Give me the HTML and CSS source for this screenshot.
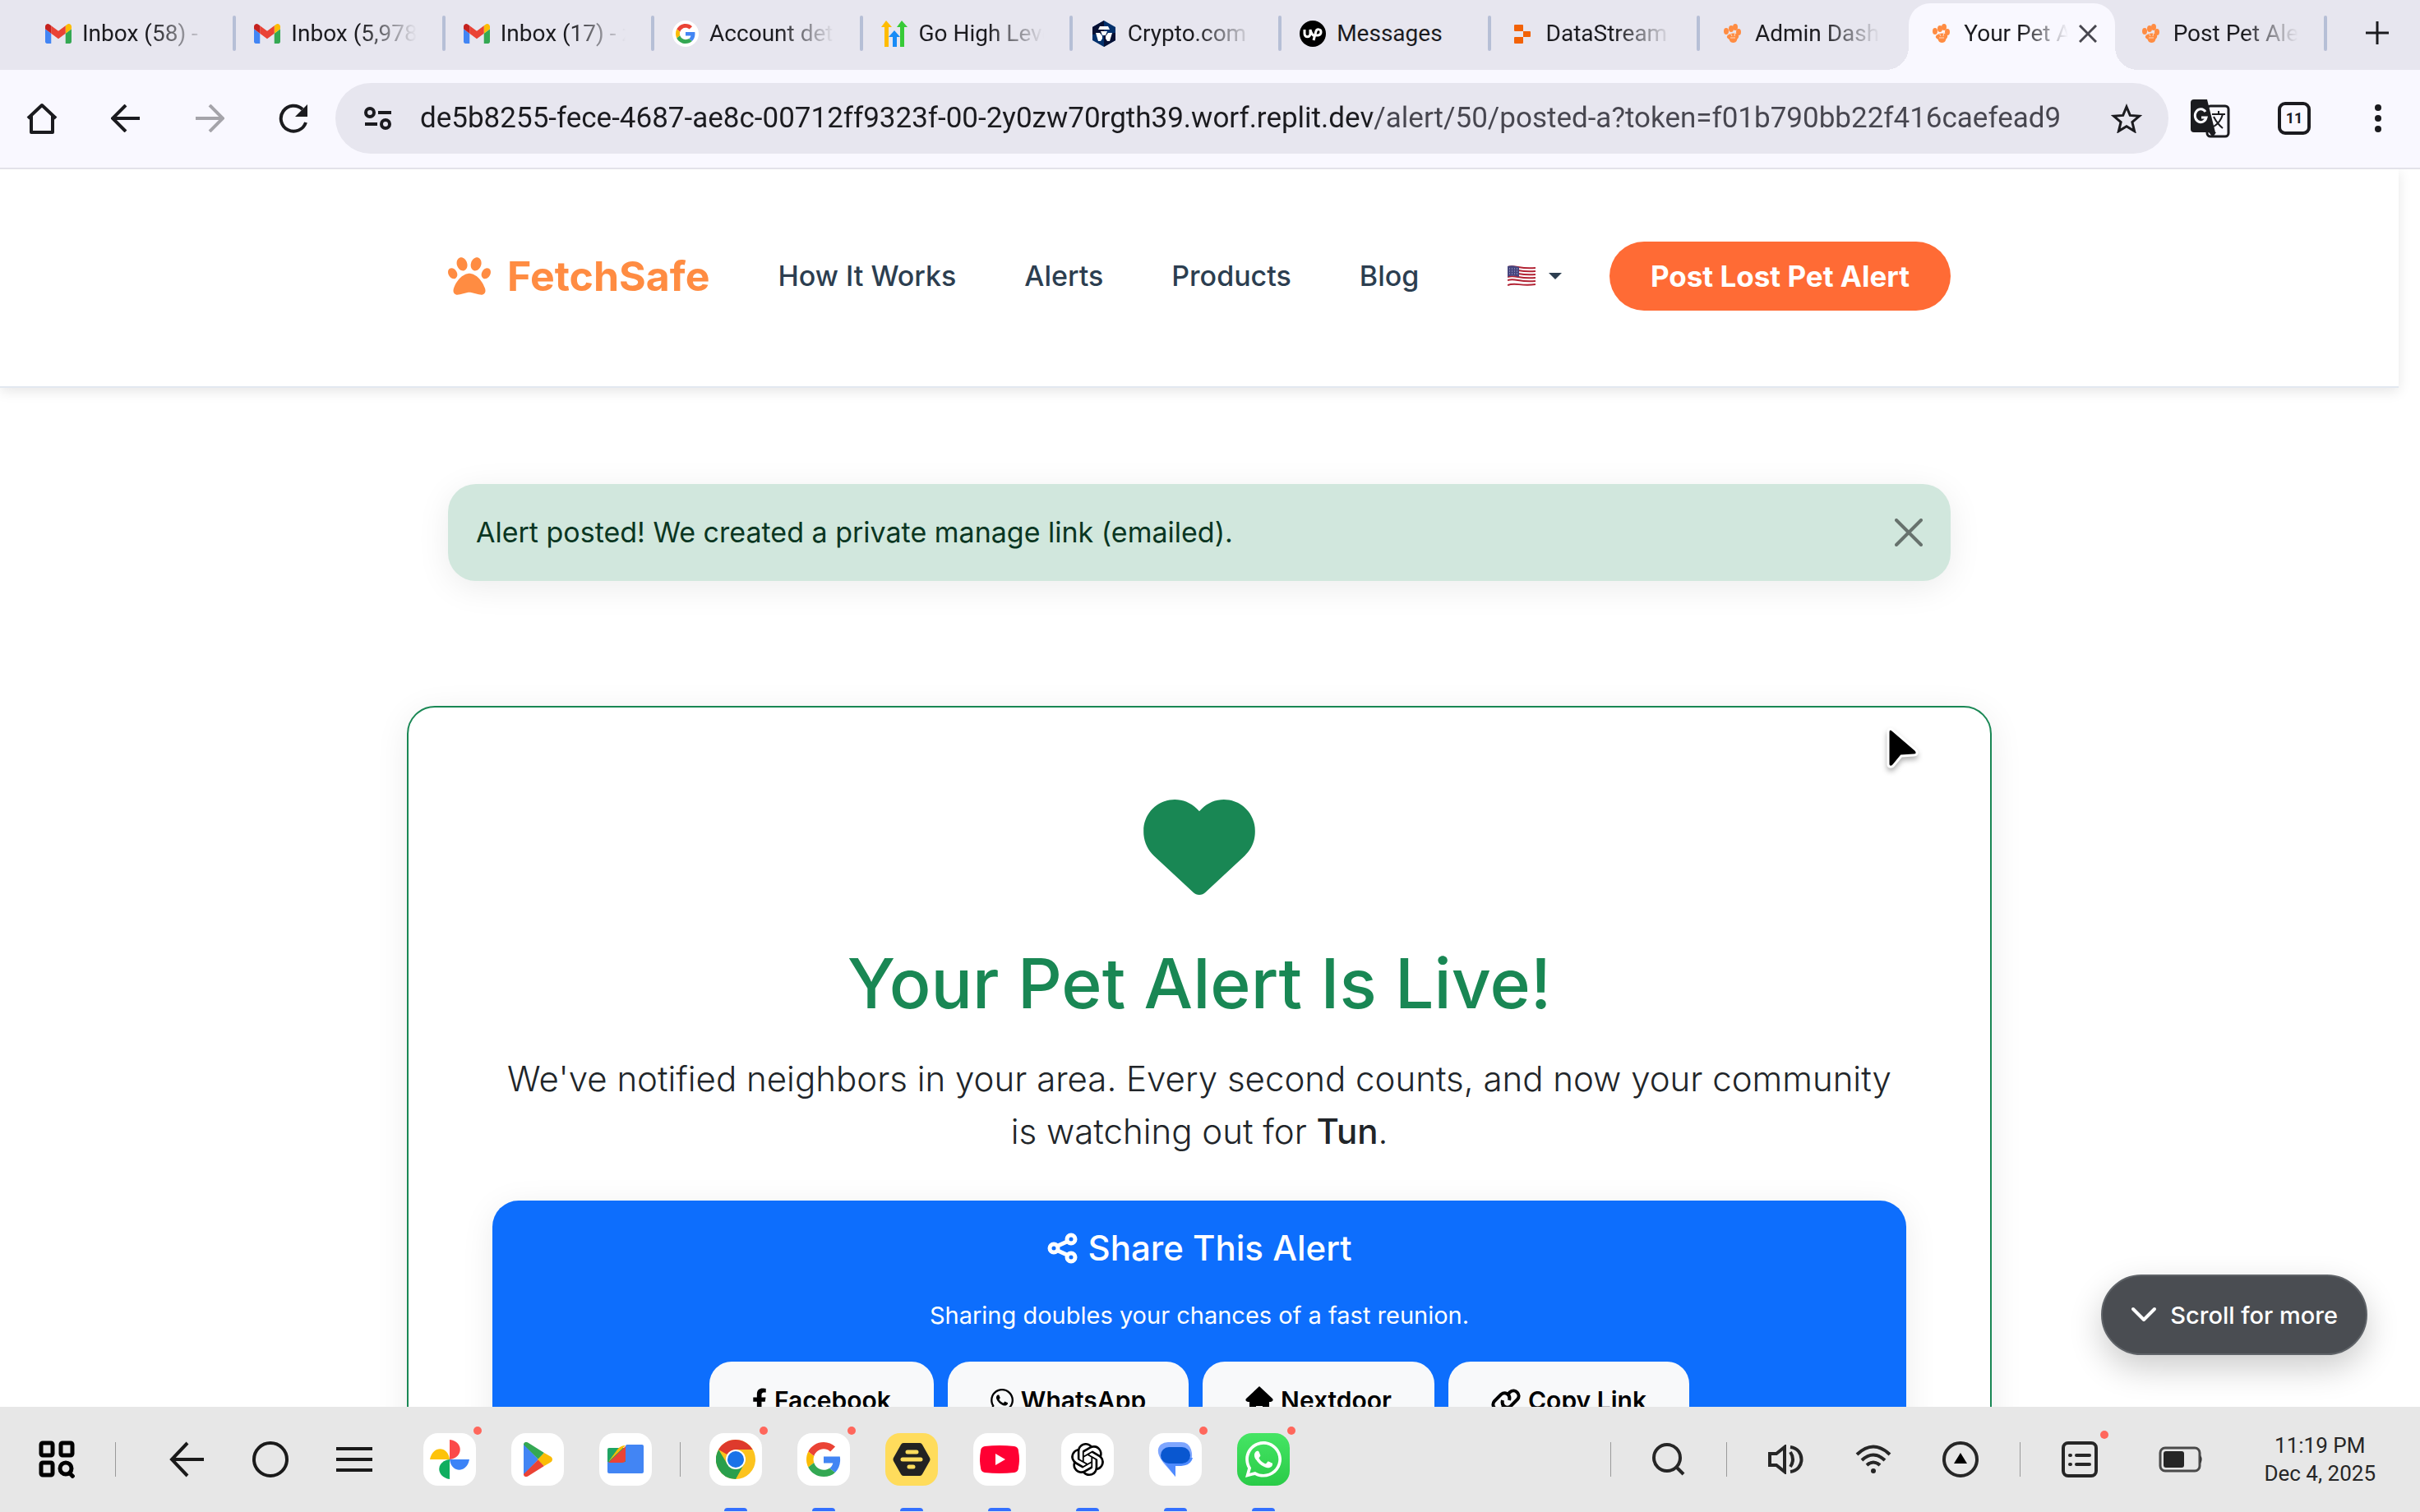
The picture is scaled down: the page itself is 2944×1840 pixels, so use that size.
FILE: index.html
```html
<!DOCTYPE html>
<html lang="en">
<head>
    <meta charset="UTF-8">
    <meta name="viewport" content="width=device-width, initial-scale=1.0">
    <title>Your Pet Alert Is Live!</title>
    <link rel="stylesheet" href="styles.css">
</head>
<body>
    <!-- Shared icon shapes -->
    <svg class="sprite" aria-hidden="true">
        <symbol id="gmail" viewBox="52 42 88 66">
            <path fill="#4285f4" d="M58 108h14V74L52 59v43c0 3.32 2.69 6 6 6"/>
            <path fill="#34a853" d="M120 108h14c3.32 0 6-2.69 6-6V59l-20 15"/>
            <path fill="#fbbc04" d="M120 48v26l20-15v-8c0-7.42-8.47-11.65-14.4-7.2"/>
            <path fill="#ea4335" d="M72 74V48l24 18 24-18v26L96 92"/>
            <path fill="#c5221f" d="M52 51v8l20 15V48l-5.6-4.2c-5.94-4.45-14.4-.22-14.4 7.2"/>
        </symbol>
        <symbol id="google" viewBox="0 0 48 48">
            <path fill="#ea4335" d="M24 9.5c3.54 0 6.71 1.22 9.21 3.6l6.85-6.85C35.9 2.38 30.47 0 24 0 14.62 0 6.51 5.38 2.56 13.22l7.98 6.19C12.43 13.72 17.74 9.5 24 9.5z"/>
            <path fill="#4285f4" d="M46.98 24.55c0-1.57-.15-3.09-.38-4.55H24v9.02h12.94c-.58 2.96-2.26 5.48-4.78 7.18l7.73 6c4.51-4.18 7.09-10.36 7.09-17.65z"/>
            <path fill="#fbbc05" d="M10.53 28.59c-.48-1.45-.76-2.99-.76-4.59s.27-3.14.76-4.59l-7.98-6.19C.92 16.46 0 20.12 0 24c0 3.88.92 7.54 2.56 10.78l7.97-6.19z"/>
            <path fill="#34a853" d="M24 48c6.48 0 11.93-2.13 15.89-5.81l-7.73-6c-2.15 1.45-4.92 2.3-8.16 2.3-6.26 0-11.57-4.22-13.47-9.91l-7.98 6.19C6.51 42.62 14.62 48 24 48z"/>
        </symbol>
        <symbol id="paw" viewBox="0 0 512 512">
            <path fill="currentColor" d="M226.5 92.9c14.3 42.9-.3 86.2-32.6 96.8s-70.1-15.6-84.4-58.5s.3-86.2 32.6-96.8s70.1 15.6 84.4 58.5zM100.4 198.6c18.9 32.4 14.3 70.1-10.2 84.1s-59.7-.9-78.5-33.3S-2.7 179.3 21.8 165.3s59.7 .9 78.5 33.3zM69.2 401.2C121.6 259.9 214.7 224 256 224s134.4 35.9 186.8 177.2c3.6 9.7 5.2 20.1 5.2 30.5v1.6c0 25.8-20.9 46.7-46.7 46.7c-11.5 0-22.9-1.4-34-4.2l-88-22c-15.3-3.8-31.3-3.8-46.6 0l-88 22c-11.1 2.8-22.5 4.2-34 4.2C84.9 480 64 459.1 64 433.3v-1.6c0-10.4 1.6-20.8 5.2-30.5zM421.8 282.7c-24.5-14-29.1-51.7-10.2-84.1s54-47.3 78.5-33.3s29.1 51.7 10.2 84.1s-54 47.3-78.5 33.3zM310.1 189.7c-32.3-10.6-46.9-53.9-32.6-96.8s52.1-69.1 84.4-58.5s46.9 53.9 32.6 96.8s-52.1 69.1-84.4 58.5z"/>
        </symbol>
        <symbol id="tab-paw" viewBox="0 0 32 32">
            <g fill="#ff8c42">
                <ellipse cx="10" cy="13" rx="3" ry="4"/><ellipse cx="16" cy="10" rx="3" ry="4"/>
                <ellipse cx="21" cy="8" rx="3" ry="4"/><ellipse cx="25" cy="14" rx="3" ry="4"/>
                <path d="M11 19c2-4 12-5 14-1 1 3-2 4-2 6-1 4-8 4-9 0 0-2-4-2-3-5z"/>
            </g>
            <path d="M15 15l2 4M21 14l-1 5M15 21h6" stroke="#ffd9bd" stroke-width="1" fill="none"/>
        </symbol>
        <symbol id="whatsapp" viewBox="0 0 448 512">
            <path fill="currentColor" d="M380.9 97.1C339 55.1 283.2 32 223.9 32c-122.4 0-222 99.6-222 222 0 39.1 10.2 77.3 29.6 111L0 480l117.7-30.9c32.4 17.7 68.9 27 106.1 27h.1c122.3 0 224.1-99.6 224.1-222 0-59.3-25.2-115-67.1-157zm-157 341.6c-33.2 0-65.7-8.9-94-25.7l-6.7-4-69.8 18.3L72 359.2l-4.4-7c-18.5-29.4-28.2-63.3-28.2-98.2 0-101.7 82.8-184.5 184.6-184.5 49.3 0 95.6 19.2 130.4 54.1 34.8 34.9 56.2 81.2 56.1 130.5 0 101.8-84.9 184.6-186.6 184.6zm101.2-138.2c-5.5-2.8-32.8-16.2-37.9-18-5.1-1.9-8.8-2.8-12.5 2.8-3.7 5.6-14.3 18-17.6 21.8-3.2 3.7-6.5 4.2-12 1.4-32.6-16.3-54-29.1-75.5-66-5.7-9.8 5.7-9.1 16.3-30.3 1.8-3.7.9-6.9-.5-9.7-1.4-2.8-12.5-30.1-17.1-41.2-4.5-10.8-9.1-9.3-12.5-9.5-3.2-.2-6.9-.2-10.6-.2-3.7 0-9.7 1.4-14.8 6.9-5.1 5.6-19.4 19-19.4 46.3 0 27.3 19.9 53.7 22.6 57.4 2.8 3.7 39.1 59.7 94.8 83.8 35.2 15.2 49 16.5 66.6 13.9 10.7-1.6 32.8-13.4 37.4-26.4 4.6-13 4.6-24.1 3.2-26.4-1.3-2.5-5-3.9-10.5-6.6z"/>
        </symbol>
    </svg>

    <!-- Tabs -->
    <div class="tab-strip">
        <div class="tab"><svg class="favicon"><use href="#gmail"/></svg><span class="tab-title">Inbox (58) - </span><span class="tab-sep"></span></div>
        <div class="tab"><svg class="favicon"><use href="#gmail"/></svg><span class="tab-title">Inbox (5,978)</span><span class="tab-sep"></span></div>
        <div class="tab"><svg class="favicon"><use href="#gmail"/></svg><span class="tab-title">Inbox (17) - z</span><span class="tab-sep"></span></div>
        <div class="tab">
            <svg class="favicon" viewBox="0 0 32 32"><circle cx="16" cy="16" r="16" fill="#fff"/><use href="#google" x="4" y="4" width="24" height="24"/></svg>
            <span class="tab-title">Account details</span><span class="tab-sep"></span>
        </div>
        <div class="tab">
            <svg class="favicon" viewBox="0 0 32 32"><path fill="#ffbc00" d="M6 0l7 8h-4v24H4V8H0z"/><path fill="#188bf6" d="M16 12l7 8h-4v12h-5V20H9z"/><path fill="#37ca37" d="M25 0l7 8h-4v24h-5V8h-4z"/></svg>
            <span class="tab-title">Go High Level</span><span class="tab-sep"></span>
        </div>
        <div class="tab">
            <svg class="favicon" viewBox="0 0 32 32"><path fill="#03316c" d="M16 0l14 8v16l-14 8L2 24V8z"/><path fill="#061033" d="M16 0L2 8v9l14-1zM16 32l14-8v-9l-14 1z"/><path fill="#fff" d="M11 7h10l2 4H9zM6 15h5l3 4v3l-2 3H9zM26 15h-5l-3 4v3l2 3h3zM12 13h8l-2 5h-4z"/></svg>
            <span class="tab-title">Crypto.com</span><span class="tab-sep"></span>
        </div>
        <div class="tab">
            <svg class="favicon" viewBox="0 0 32 32"><circle cx="16" cy="16" r="16"/><path d="M6 11v5c0 5 7 5 7 0v-5c1 4 3 7 5 8M17 24l3-11c1-3 6-3 6 1s-5 5-7 3" fill="none" stroke="#fff" stroke-width="3"/></svg>
            <span class="tab-title full">Messages</span><span class="tab-sep"></span>
        </div>
        <div class="tab">
            <svg class="favicon" viewBox="0 0 32 32"><path fill="#f26207" d="M7 5h9q1 0 1 1v7H7q-1 0-1-1V6q0-1 1-1zM17 13h8q1 0 1 1v5q0 1-1 1h-8zM6 21q0-1 1-1h10v7q0 1-1 1H7q-1 0-1-1z"/></svg>
            <span class="tab-title">DataStream</span><span class="tab-sep"></span>
        </div>
        <div class="tab"><svg class="favicon"><use href="#tab-paw"/></svg><span class="tab-title">Admin Dash</span><span class="tab-sep hidden"></span></div>
        <div class="tab active">
            <svg class="favicon"><use href="#tab-paw"/></svg><span class="tab-title">Your Pet Alert</span>
            <button class="tab-close" aria-label="Close tab"><svg width="22" height="22" viewBox="0 0 22 22"><path d="M1 1l20 20M21 1L1 21" stroke="#47464f" stroke-width="3"/></svg></button>
        </div>
        <div class="tab"><svg class="favicon"><use href="#tab-paw"/></svg><span class="tab-title">Post Pet Alert</span><span class="tab-sep"></span></div>
        <button class="new-tab" aria-label="New tab"><svg width="28" height="28" viewBox="0 0 28 28"><path d="M14 0v28M0 14h28" stroke="#1b1b1f" stroke-width="3"/></svg></button>
    </div>

    <!-- Address bar -->
    <div class="toolbar">
        <button class="tool" aria-label="Home"><svg width="40" height="40" viewBox="0 0 40 40"><path d="M3 20L20 4l17 16M7 17v20h26V17" fill="none" stroke="currentColor" stroke-width="4" stroke-linejoin="round"/></svg></button>
        <button class="tool" aria-label="Back"><svg width="36" height="34" viewBox="0 0 36 34"><path d="M35 17H3M18 1L2 17l16 16" fill="none" stroke="currentColor" stroke-width="4"/></svg></button>
        <button class="tool disabled" aria-label="Forward"><svg width="36" height="34" viewBox="0 0 36 34"><path d="M1 17h32M18 1l16 16-16 16" fill="none" stroke="currentColor" stroke-width="4"/></svg></button>
        <button class="tool" aria-label="Reload"><svg width="36" height="36" viewBox="0 0 36 36"><path d="M33 23A15.500 15.500 0 1 1 29 7" fill="none" stroke="currentColor" stroke-width="4"/><path d="M35 1v15H20z" fill="currentColor"/></svg></button>
        <div class="omnibox">
            <svg width="34" height="28" viewBox="0 0 34 28" fill="none" stroke="#1b1b1f" stroke-width="4"><circle cx="7" cy="7" r="5"/><path d="M17 7h16M1 21h15"/><circle cx="26" cy="21" r="5"/></svg>
            <input class="url" type="text" aria-label="Address" value="de5b8255-fece-4687-ae8c-00712ff9323f-00-2y0zw70rgth39.worf.replit.dev/alert/50/posted-a?token=f01b790bb22f416caefead9">
            <button class="star" aria-label="Bookmark"><svg width="38" height="36" viewBox="0 0 38 36"><path d="M19 4l4.300 10.400 11.200.9-8.600 7.300 2.700 11L19 27.700l-9.600 5.900 2.700-11-8.600-7.300 11.200-.9z" fill="none" stroke="currentColor" stroke-width="3"/></svg></button>
        </div>
        <button class="tool" aria-label="Translate"><svg width="48" height="48" viewBox="0 0 48 48"><rect x="20" y="9" width="26" height="37" rx="4" fill="none" stroke="currentColor" stroke-width="3"/><path d="M4 1h16l10 40H4q-4 0-4-4V5q0-4 4-4z" fill="currentColor"/><path d="M22 41h9l-4 6z" fill="currentColor"/><path d="M18 16a7 8 0 1 0 1 7h-6" fill="none" stroke="#f9f8ff" stroke-width="3"/><path d="M26 19h16M34 15v4M39 19c-2 8-6 12-11 15M28 22c3 6 6 10 11 14" fill="none" stroke="currentColor" stroke-width="2"/></svg></button>
        <button class="tool tab-count" aria-label="Open tabs"><span>11</span></button>
        <button class="tool" aria-label="Menu"><svg width="10" height="36" viewBox="0 0 10 36" fill="currentColor"><circle cx="5" cy="5" r="4"/><circle cx="5" cy="18" r="4"/><circle cx="5" cy="31" r="4"/></svg></button>
    </div>

    <!-- Page -->
    <div class="page">
        <header class="site-header">
            <nav class="container nav">
                <a class="brand" href="#"><svg width="52" height="52"><use href="#paw"/></svg>FetchSafe</a>
                <a class="nav-link" href="#">How It Works</a>
                <a class="nav-link" href="#">Alerts</a>
                <a class="nav-link" href="#">Products</a>
                <a class="nav-link" href="#">Blog</a>
                <div class="nav-actions">
                    <button class="lang" aria-label="Language">
                        <svg width="34" height="26" viewBox="0 0 34 26"><path d="M0 1c10-3 14 4 34 1v21c-14 4-22-3-34 2z" fill="#fff"/><path d="M0 2c10-3 14 3 34 1M0 6c10-3 14 3 34 1M0 10c10-3 14 3 34 1M0 14c10-3 14 3 34 1M0 18c10-3 14 3 34 1M0 24c10-4 16 2 34-1" fill="none" stroke="#b22334" stroke-width="2"/><path d="M0 1c6-2 10 0 14 1v12c-5-1-9-2-14 0z" fill="#46467f"/><path d="M2 4h11M2 7h11M2 10h11" stroke="#b9b9dd" stroke-width="1" stroke-dasharray="1 2"/></svg>
                        <svg width="16" height="8" viewBox="0 0 16 8"><path d="M0 0h16L8 8z" fill="#2c3e50"/></svg>
                    </button>
                    <button class="btn-post">Post Lost Pet Alert</button>
                </div>
            </nav>
        </header>

        <main>
            <div class="container alert" role="alert">
                <span>Alert posted! We created a private manage link (emailed).</span>
                <button class="alert-close" aria-label="Close"><svg width="34" height="34" viewBox="0 0 34 34"><path d="M2 2l30 30M32 2L2 32" stroke="#000" stroke-width="4" stroke-linecap="round"/></svg></button>
            </div>

            <section class="card">
                <svg class="heart" width="136" height="116" viewBox="0 42 512 438"><path fill="currentColor" d="M47.600 300.400L228.300 469.100c7.500 7 17.400 10.900 27.700 10.900s20.200-3.900 27.700-10.900L464.400 300.400c30.400-28.300 47.600-68 47.600-109.500v-5.800c0-69.900-50.500-129.500-119.400-141C347 36.500 300.600 51.400 268 84L256 96 244 84c-32.600-32.600-79-47.500-124.600-39.900C50.500 55.600 0 115.200 0 185.100v5.800c0 41.500 17.200 81.200 47.600 109.500z"/></svg>
                <h1>Your Pet Alert Is Live!</h1>
                <p class="lead">We've notified neighbors in your area. Every second counts, and now your community is watching out for <strong>Tun</strong>.</p>

                <div class="share">
                    <h2><svg width="38" height="38" viewBox="0 0 38 38" fill="none" stroke="currentColor" stroke-width="5"><circle cx="8" cy="19" r="5"/><circle cx="29" cy="8" r="5"/><circle cx="29" cy="30" r="5"/><path d="M13 16l11-5M13 22l11 5"/></svg>Share This Alert</h2>
                    <p>Sharing doubles your chances of a fast reunion.</p>
                    <div class="share-buttons">
                        <button><svg width="18" height="30" viewBox="0 0 320 512"><path fill="currentColor" d="M279 288l14-93h-89v-60c0-25 12-50 52-50h41V6S260 0 225 0c-73 0-121 44-121 125v70H23v93h81v224h100V288z"/></svg>Facebook</button>
                        <button><svg width="28" height="32"><use href="#whatsapp"/></svg>WhatsApp</button>
                        <button><svg width="34" height="34" viewBox="0 0 34 34"><path fill="currentColor" d="M17 0l16 15q2 3-2 4h-2v11q0 3-3 3h-5v-9h-8v9H8q-3 0-3-3V19H3q-4-1-2-4z"/></svg>Nextdoor</button>
                        <button><svg width="36" height="30" viewBox="0 0 36 30" fill="none" stroke="currentColor" stroke-width="4"><path d="M16 22l-3 3c-6 5-14-3-9-9l8-8c5-4 12 0 10 7"/><path d="M20 8l3-3c6-5 14 3 9 9l-8 8c-5 4-12 0-10-7"/></svg>Copy Link</button>
                    </div>
                </div>
            </section>
        </main>

        <button class="scroll-more"><svg width="32" height="20" viewBox="0 0 32 20"><path d="M3 3l13 13L29 3" fill="none" stroke="#fff" stroke-width="4" stroke-linecap="round" stroke-linejoin="round"/></svg>Scroll for more</button>
        <svg class="cursor" width="48" height="56" viewBox="0 0 48 56"><path d="M5 7c0-4 3-5 6-2l27 23c4 4 2 7-2 7l-15 1-9 11c-3 4-7 2-7-1z" fill="#000" stroke="#fff" stroke-width="3"/></svg>
    </div>

    <!-- System taskbar -->
    <footer class="taskbar">
        <button aria-label="All apps"><svg width="44" height="46" viewBox="0 0 44 46" fill="none" stroke="#000" stroke-width="5"><rect x="3" y="3" width="14" height="15" rx="2"/><rect x="27" y="3" width="14" height="15" rx="2"/><rect x="3" y="27" width="14" height="15" rx="2"/><circle cx="33" cy="34" r="7"/><path d="M37 39l6 6"/></svg></button>
        <span class="bar-sep"></span>
        <div class="system-nav">
            <button aria-label="Back"><svg width="44" height="44" viewBox="0 0 44 44"><path d="M43 22H5M23 2L4 22l19 20" fill="none" stroke="#1a1a1a" stroke-width="4"/></svg></button>
            <button aria-label="Home"><svg width="44" height="44" viewBox="0 0 44 44"><circle cx="22" cy="22" r="20" fill="none" stroke="#1a1a1a" stroke-width="4"/></svg></button>
            <button aria-label="Recents"><svg width="44" height="32" viewBox="0 0 44 32"><path d="M0 3h44M0 16h44M0 29h44" stroke="#1a1a1a" stroke-width="4"/></svg></button>
        </div>
        <div class="apps">
            <a class="app notify" href="#" aria-label="Photos"><svg width="48" height="48" viewBox="0 0 48 48"><path fill="#fb4a4a" d="M24 0c17 2 17 22 0 24z"/><path fill="#3c83f7" d="M24 24h24c-3 17-22 17-24 0z"/><path fill="#0fae5f" d="M24 24v24c-17-3-17-22 0-24z"/><path fill="#fdc30a" d="M0 24h24c-2-17-21-17-24 0z"/></svg></a>
            <a class="app" href="#" aria-label="Play Store"><svg width="38" height="42" viewBox="0 0 38 42"><path fill="#4285f4" d="M2 2v38l18-19z"/><path fill="#34a853" d="M2 3c0-3 3-4 6-2l19 12-7 8z"/><path fill="#ea4335" d="M2 39c0 3 3 4 6 2l19-12-7-8z"/><path fill="#fbbc04" d="M27 13l7 4c4 2 4 6 0 8l-7 4-8-8z"/></svg></a>
            <a class="app" href="#" aria-label="Files"><svg width="44" height="36" viewBox="0 0 44 36"><path d="M22 2q0-2 2-2h18q2 0 2 2v31q0 2-2 2H2q-2 0-2-2V20h22z" fill="#4285f4"/><path d="M2 4h20v17H0V6q0-2 2-2z" fill="#1fa463"/><path d="M22 2v16q0 4-4 4H1z" fill="#ea4335"/><path d="M22 1L1 21 12 6q4-5 10-5z" fill="#fbbc04"/></svg></a>
        </div>
        <span class="bar-sep"></span>
        <div class="apps">
            <a class="app running notify" href="#" aria-label="Chrome"><svg width="48" height="48" viewBox="0 0 48 48"><circle cx="24" cy="24" r="24" fill="#fcc31e"/><path fill="#de3a2c" d="M24 24L3 12a24 24 0 0 1 41.500 0H24z"/><path fill="#2a9f4c" d="M3.200 12A24 24 0 0 0 24 48l10-18-20 0z"/><circle cx="24" cy="24" r="12" fill="#fff"/><circle cx="24" cy="24" r="10" fill="#1a73e8"/></svg></a>
            <a class="app running notify" href="#" aria-label="Google"><svg width="42" height="42"><use href="#google"/></svg></a>
            <a class="app running yellow" href="#" aria-label="Hive"><svg width="46" height="40" viewBox="0 0 46 40"><path d="M13 0h20q2 0 3 2l9 16q1 2 0 4l-9 16q-1 2-3 2H13q-2 0-3-2L1 22q-1-2 0-4l9-16q1-2 3-2z" fill="#222"/><path d="M18 11h11M12 20h22M20 29h5" stroke="#ffdc5c" stroke-width="5" stroke-linecap="round"/></svg></a>
            <a class="app running" href="#" aria-label="YouTube"><svg width="48" height="34" viewBox="0 0 48 34"><path d="M6 1q18-2 36 0 5 1 5 6 2 10 0 20-0 5-5 6-18 2-36 0-5-1-5-6-2-10 0-20 0-5 5-6z" fill="#ff0033"/><path d="M19 10v14l12-7z" fill="#fff"/></svg></a>
            <a class="app running" href="#" aria-label="ChatGPT"><svg width="40" height="40" viewBox="0 0 24 24"><path d="M22.282 9.821a5.985 5.985 0 0 0-.516-4.911 6.046 6.046 0 0 0-6.510-2.900A6.065 6.065 0 0 0 4.981 4.182a5.985 5.985 0 0 0-3.998 2.900 6.046 6.046 0 0 0 .743 7.097 5.980 5.980 0 0 0 .511 4.911 6.051 6.051 0 0 0 6.515 2.900A5.985 5.985 0 0 0 13.260 24a6.056 6.056 0 0 0 5.772-4.206 5.989 5.989 0 0 0 3.998-2.900 6.056 6.056 0 0 0-.748-7.073zm-9.022 12.608a4.476 4.476 0 0 1-2.876-1.041l.142-.080 4.778-2.758a.795.795 0 0 0 .393-.681v-6.737l2.020 1.169a.071.071 0 0 1 .038.052v5.583a4.504 4.504 0 0 1-4.495 4.494zm-9.661-4.125a4.471 4.471 0 0 1-.535-3.014l.142.085 4.783 2.758a.771.771 0 0 0 .781 0l5.843-3.369v2.332a.080.080 0 0 1-.033.062L9.740 19.950a4.499 4.499 0 0 1-6.141-1.646zM2.341 7.896a4.485 4.485 0 0 1 2.366-1.973V11.600a.766.766 0 0 0 .388.677l5.814 3.354-2.020 1.169a.076.076 0 0 1-.071 0l-4.830-2.787A4.504 4.504 0 0 1 2.341 7.872zm16.596 3.856L13.104 8.364 15.119 7.200a.076.076 0 0 1 .071 0l4.830 2.791a4.494 4.494 0 0 1-.677 8.104v-5.677a.790.790 0 0 0-.407-.667zm2.011-3.023l-.142-.085-4.774-2.782a.776.776 0 0 0-.785 0L9.409 9.230V6.897a.066.066 0 0 1 .028-.062l4.830-2.787a4.499 4.499 0 0 1 6.680 4.660zM8.307 12.863l-2.020-1.164a.080.080 0 0 1-.038-.057V6.074a4.499 4.499 0 0 1 7.376-3.454l-.142.081L8.704 5.459a.795.795 0 0 0-.393.681zm1.098-2.365l2.602-1.500 2.607 1.500v2.999l-2.597 1.500-2.607-1.500Z"/></svg></a>
            <a class="app running notify" href="#" aria-label="Messages"><svg width="44" height="44" viewBox="0 0 44 44"><path d="M13 1h16q9 0 12 9 5 17-12 19l-7 1v13L8 27Q-4 12 4 4q4-3 9-3z" fill="#7ea6ff"/><path d="M4 20h39q-2 9-14 10h-7v13z" fill="#4f8bff"/><rect x="4" y="7" width="36" height="20" rx="10" fill="#0957d0"/></svg></a>
            <a class="app running notify green" href="#" aria-label="WhatsApp"><svg width="44" height="46" viewBox="0 32 448 448"><use href="#whatsapp" width="448" height="512"/></svg></a>
        </div>

        <div class="tray">
            <span class="bar-sep"></span>
            <button aria-label="Search"><svg width="40" height="40" viewBox="0 0 40 40" fill="none" stroke="#262626" stroke-width="4"><circle cx="18" cy="18" r="16"/><path d="M29 29l9 9"/></svg></button>
            <span class="bar-sep"></span>
            <div class="status">
                <svg width="44" height="36" viewBox="0 0 44 36" fill="none" stroke="#262626" stroke-width="4"><path d="M2 11h8L20 3v30L10 25H2zM27 9q6 9 0 18"/><path d="M27 3c18 2 18 28 0 30"/></svg>
                <svg width="44" height="36" viewBox="0 0 44 36" fill="none" stroke="#262626" stroke-width="4"><path d="M2 12q20-19 40 0M8 19q14-13 28 0M14 25q8-7 16 0"/><circle cx="22" cy="32" r="3" fill="#262626" stroke="none"/></svg>
                <svg width="44" height="44" viewBox="0 0 44 44"><circle cx="22" cy="22" r="20" fill="none" stroke="#262626" stroke-width="4"/><path d="M22 14l8 13H14z"/></svg>
            </div>
            <span class="bar-sep"></span>
            <button class="notes notify" aria-label="Notifications"><svg width="44" height="44" viewBox="0 0 44 44" fill="none" stroke="#262626" stroke-width="4"><rect x="2" y="2" width="40" height="40" rx="6"/><path d="M10 17h1M10 28h1M18 17h16M18 28h16" stroke-linecap="round"/></svg></button>
            <svg class="battery" width="54" height="32" viewBox="0 0 54 32"><rect x="2" y="2" width="48" height="28" rx="6" fill="none" stroke="#4a4a4a" stroke-width="3"/><path d="M51 11q3 5 0 10z" fill="#262626"/><rect x="6" y="6" width="25" height="20" rx="3" fill="#262626"/></svg>
            <div class="clock"><span>11:19 PM</span><span>Dec 4, 2025</span></div>
        </div>
    </footer>
</body>
</html>
```
FILE: styles.css
```css
* {
    box-sizing: border-box;
}
body {
    margin: 0;
    height: 100vh;
    display: flex;
    flex-direction: column;
    overflow: hidden;
    font-family: Inter, sans-serif;
    background-color: #fff;
    color: #212529;
}
button {
    font-family: inherit;
    border: none;
    padding: 0;
    background: none;
    color: inherit;
}
a {
    color: inherit;
    text-decoration: none;
}
svg {
    flex-shrink: 0;
    display: block;
}
.sprite {
    position: absolute;
    width: 0;
    height: 0;
}

/* Browser tabs */
.tab-strip {
    display: grid;
    grid-template-columns: repeat(11, minmax(0, 1fr)) 113px;
    height: 85px;
    padding-left: 33px;
    background-color: #e7e6ef;
    font-family: Roboto, sans-serif;
    color: #1b1b1f;
}
.tab {
    display: flex;
    align-items: center;
    gap: 13px;
    padding: 0 0 4px 22px;
}
.favicon {
    width: 32px;
    height: 32px;
}
.tab-title {
    flex: 1;
    min-width: 0;
    margin-right: 18px;
    overflow: hidden;
    white-space: pre;
    font-size: 28px;
    line-height: 40px;
    -webkit-mask-image: linear-gradient(90deg, #000 55%, transparent);
    mask-image: linear-gradient(90deg, #000 55%, transparent);
}
.tab-title.full {
    -webkit-mask-image: none;
    mask-image: none;
}
.tab-sep {
    width: 4px;
    height: 43px;
    border-radius: 2px;
    background-color: #b6bfd6;
}
.tab-sep.hidden {
    visibility: hidden;
}
.tab.active {
    position: relative;
    margin: 4px 4px 0 0;
    padding: 0 22px 8px;
    border-radius: 26px 26px 0 0;
    background-color: #f9f8ff;
}
.tab.active::before,
.tab.active::after {
    content: "";
    position: absolute;
    bottom: 0;
    width: 28px;
    height: 28px;
}
.tab.active::before {
    left: -28px;
    background: radial-gradient(circle at 0 0, transparent 28px, #f9f8ff 28px);
}
.tab.active::after {
    right: -28px;
    background: radial-gradient(circle at 100% 0, transparent 28px, #f9f8ff 28px);
}
.tab.active .tab-title {
    margin-right: 0;
}
.new-tab {
    padding: 0 0 5px 9px;
    display: flex;
    align-items: center;
    justify-content: center;
}

/* Toolbar */
.toolbar {
    display: flex;
    align-items: center;
    height: 121px;
    padding-bottom: 1px;
    background-color: #f9f8ff;
    border-bottom: 2px solid #e3e2e9;
    color: #1b1b1f;
    font-family: Roboto, sans-serif;
}
.tool {
    width: 102px;
    height: 86px;
    display: flex;
    align-items: center;
    justify-content: center;
}
.tool.disabled {
    color: #a5a4aa;
}
.omnibox {
    flex: 1;
    min-width: 0;
    height: 86px;
    display: flex;
    align-items: center;
    gap: 34px;
    padding: 0 32px 0 35px;
    border-radius: 43px;
    background-color: #e7e6ef;
}
.url {
    flex: 1;
    min-width: 0;
    margin-right: 16px;
    padding: 0;
    border: none;
    outline: none;
    font-family: inherit;
    font-size: 35px;
    line-height: 44px;
    color: transparent;
    /* host is darker than the path */
    background: linear-gradient(90deg, #1b1b1f 1158px, #47464f 1158px);
    -webkit-background-clip: text;
    background-clip: text;
}
.tab-count span {
    width: 40px;
    height: 40px;
    border: 4px solid #1b1b1f;
    border-radius: 9px;
    font-size: 18px;
    font-weight: 700;
    line-height: 32px;
    text-align: center;
}

/* Page */
.page {
    flex: 1;
    min-height: 0;
    position: relative;
    overflow: hidden;
    padding-right: 26px;
}
.site-header {
    padding: 88px 0 92px;
    border-bottom: 2px solid #e2e8f0;
    box-shadow: 0 4px 15px rgba(0, 0, 0, 0.1);
}
.container {
    max-width: 1828px;
    margin: 0 auto;
}
.nav {
    display: flex;
    align-items: center;
    gap: 83px;
}
.brand {
    display: flex;
    align-items: center;
    gap: 20px;
    color: #ff8c42;
    font-size: 50px;
    font-weight: 700;
    line-height: 64px;
}
.nav-link {
    color: #2c3e50;
    font-size: 34px;
    font-weight: 500;
    line-height: 52px;
}
.nav-actions {
    display: flex;
    align-items: center;
    gap: 58px;
    margin-left: auto;
}
.lang {
    display: flex;
    align-items: center;
    gap: 16px;
}
.btn-post {
    height: 84px;
    padding: 0 50px;
    border-radius: 42px;
    background-color: #ff6b35;
    color: #fff;
    font-size: 35px;
    font-weight: 700;
}
main {
    padding-top: 117px;
}
.alert {
    display: flex;
    align-items: center;
    justify-content: space-between;
    height: 118px;
    padding: 0 34px;
    border-radius: 34px;
    background-color: #d1e7dd;
    box-shadow: 0 8px 40px rgba(0, 0, 0, 0.08);
    color: #0a3622;
    font-size: 34px;
    line-height: 52px;
}
.alert-close {
    opacity: 0.5;
}
.card {
    max-width: 1928px;
    margin: 152px auto 0;
    padding: 112px 102px;
    border: 2px solid #198754;
    border-radius: 34px;
    background-color: #fff;
    box-shadow: 0 8px 40px rgba(0, 0, 0, 0.08);
    text-align: center;
}
.heart {
    margin: 0 auto;
    color: #198754;
}
h1 {
    margin: 57px 0 33px;
    color: #198754;
    font-size: 84px;
    font-weight: 500;
    line-height: 102px;
}
.lead {
    margin: 0 0 52px;
    font-size: 42px;
    font-weight: 300;
    line-height: 64px;
}
.lead strong {
    font-weight: 500;
}
.share {
    padding: 33px 34px;
    border-radius: 32px;
    background-color: #0d6efd;
    box-shadow: 0 8px 40px rgba(0, 0, 0, 0.08);
    color: #fff;
}
.share h2 {
    display: flex;
    align-items: center;
    justify-content: center;
    gap: 12px;
    margin: 0;
    font-size: 42px;
    font-weight: 500;
    line-height: 50px;
}
.share p {
    margin: 35px 0 34px;
    font-size: 29px;
    line-height: 44px;
}
.share-buttons {
    display: flex;
    justify-content: center;
    gap: 17px;
}
.share-buttons button {
    display: flex;
    align-items: center;
    gap: 9px;
    height: 94px;
    padding: 0 52px;
    border-radius: 27px;
    background-color: #f8f9fa;
    color: #000;
    font-size: 30px;
    font-weight: 600;
}
.scroll-more {
    position: absolute;
    right: 64px;
    bottom: 63px;
    display: flex;
    align-items: center;
    gap: 16px;
    height: 98px;
    padding: 0 34px;
    border: 2px solid #5f6368;
    border-radius: 49px;
    background-color: #4a4d52;
    box-shadow: 0 16px 40px rgba(0, 0, 0, 0.2);
    color: #fff;
    font-size: 29px;
    font-weight: 500;
}
.cursor {
    position: absolute;
    left: 2292px;
    top: 678px;
    filter: drop-shadow(0 4px 3px rgba(0, 0, 0, 0.3));
}

/* Taskbar */
.taskbar {
    display: flex;
    align-items: center;
    height: 128px;
    padding: 0 54px 0 47px;
    background-color: #e7e7e7;
    font-family: Roboto, sans-serif;
}
.bar-sep {
    width: 1px;
    height: 42px;
    background-color: #9a9a9a;
}
.taskbar > .bar-sep {
    margin: 0 35px 0 34px;
}
.taskbar > button + .bar-sep {
    margin: 0 64px 0 49px;
}
.system-nav {
    display: flex;
    align-items: center;
    gap: 58px;
    margin-right: 62px;
}
.apps {
    display: flex;
    gap: 43px;
}
.app {
    position: relative;
    display: flex;
    align-items: center;
    justify-content: center;
    width: 64px;
    height: 64px;
    border-radius: 18px;
    background-color: #fff;
}
.app.yellow {
    background-color: #ffdc5c;
}
.app.green {
    background: linear-gradient(#45e564, #2acb48);
    color: #fff;
}
.app.running::before {
    content: "";
    position: absolute;
    left: 18px;
    top: 91px;
    width: 28px;
    height: 4px;
    border-radius: 4px 4px 0 0;
    background-color: #3370ff;
}
.notify::after {
    content: "";
    position: absolute;
    top: -8px;
    right: -7px;
    width: 10px;
    height: 10px;
    border-radius: 50%;
    background-color: #ff675c;
}
.tray {
    display: flex;
    align-items: center;
    gap: 50px;
    margin-left: auto;
    color: #262626;
}
.status {
    display: flex;
    align-items: center;
    gap: 62px;
}
.notes {
    position: relative;
}
.notes::after {
    top: -13px;
    right: -13px;
}
.battery {
    margin: 0 24px;
}
.clock {
    display: flex;
    flex-direction: column;
    text-align: center;
    font-size: 26px;
    line-height: 34px;
}
```
